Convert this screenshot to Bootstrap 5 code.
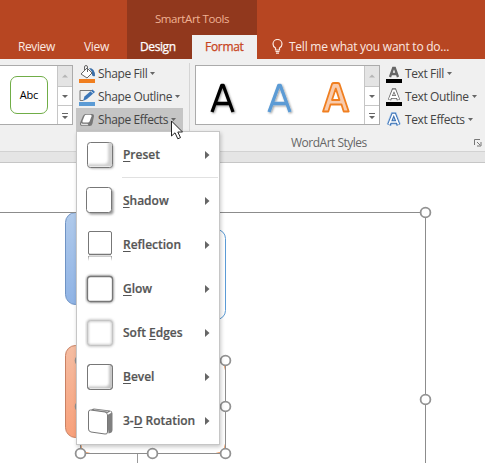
<!DOCTYPE html>
<html lang="en">
<head>
<meta charset="utf-8">
<title>SmartArt Tools</title>
<link href="https://cdn.jsdelivr.net/npm/bootstrap@5.3.0/dist/css/bootstrap.min.css" rel="stylesheet">
<style>
body{width:485px;height:463px;font:12px/16px "Open Sans","Noto Sans",sans-serif;color:#444;background:#fff}
svg{display:block;flex:none}
.titlebar{height:59px;background:#b74622;color:#fbe9e1}
.tabs-main{width:127px}
.context-tabs{width:130px;background:#91381d}
.context-title{height:35px;padding-top:11px;padding-left:0;color:#f0b294;font-size:11.5px;letter-spacing:-.4px}
.tab{height:24px;line-height:24px}
.tab-review{margin-left:18px;width:66px;letter-spacing:-.4px}
.tab-view{letter-spacing:-.3px}
.tab-design{width:65px;padding-left:13px;color:#fff;-webkit-text-stroke:.25px #fff;letter-spacing:-.4px}
.tab-format{width:65px;padding-left:13px;background:#f0f0f0;color:#c8441c;-webkit-text-stroke:.25px #c8441c;letter-spacing:-.3px}
.tellme{padding-left:15px;gap:5px;height:24px;letter-spacing:-.24px}
.ribbon{height:92px;background:#f0f0f0}
.gallery{height:60px;margin-top:6px;background:#fff;border:1px solid #ababab}
.gallery-a{width:73px;border-left:0}
.gallery-b{width:185px;margin-left:5px}
.abc{width:38px;height:38px;margin-left:10px;border:1px solid #70ad47;border-radius:7px;color:#000;font-size:11px;letter-spacing:-.2px}
.scroller{width:15px;border-left:1px solid #c6c6c6}
.scroller>div+div{border-top:1px solid #c6c6c6}
.s1{height:20px;background:#e4e4e4}.s2{height:19px}
.cmds{margin-top:3px}
.cmd{height:23px;padding-left:3px;gap:3px;font-size:12px;letter-spacing:-.38px;white-space:nowrap}
.cmd.on{background:#c5c5c5}
.cmds-shape{width:107px;margin-left:3px}
.rule{width:1px;height:80px;margin:4px 0 0 6px;background:#d5d5d5}
.group-label{left:291px;top:135px;color:#666;letter-spacing:-.5px}
.launcher{left:183px}
.band{height:12px;background:#e5e5e5;border-top:1px solid #d2d2d2;border-bottom:1px solid #c6c6c6}
.effects{left:76px;top:131px;width:144px;height:314px;background:#fff;border:1px solid #c6c6c6;padding-top:1px;box-shadow:1px 2px 4px rgba(0,0,0,.22)}
.effect{height:44px;padding:0 9px 0 8px;font-weight:600;color:#555;letter-spacing:-.02px;-webkit-text-stroke:.2px #555}
.effect>span{margin-left:6px;line-height:18px}
.effect u{text-underline-offset:2px}
.divide{height:2px;margin:0 1px 0 45px;border-top:1px solid #e1e1e1}
.pointer{left:171px;top:120px}
</style>
<script src="https://cdn.jsdelivr.net/npm/bootstrap@5.3.0/dist/js/bootstrap.bundle.min.js"></script>
</head>
<body class="position-relative overflow-hidden m-0">
<header class="titlebar d-flex">
  <div class="tabs-main d-flex align-items-end"><div class="tab tab-review">Review</div><div class="tab tab-view">View</div></div>
  <div class="context-tabs"><div class="context-title text-center">SmartArt Tools</div><div class="d-flex"><div class="tab tab-design">Design</div><div class="tab tab-format">Format</div></div></div>
  <div class="tellme d-flex align-items-center align-self-end"><svg width="12" height="16" fill="none" stroke="#fbe9e1" stroke-width="1.2"><path d="M3.500 11V9Q1 7.500 1 5a4.500 4.500 0 0 1 9 0q0 2.500-2.500 4v2zM3.500 12.500h4M4 14.200h3"/></svg><span>Tell me what you want to do...</span></div>
</header>
<main>
<section class="ribbon d-flex align-items-start">
  <div class="gallery gallery-a d-flex align-items-center justify-content-between">
    <div class="abc d-flex align-items-center justify-content-center">Abc</div>
    <div class="scroller h-100"><div class="s1"><svg width="14" height="20"><path d="M4 11.500h6l-3-3z" fill="#b5b5b5"/></svg></div><div class="s2"><svg width="14" height="18"><path d="M4 8h6l-3 3z" fill="#666"/></svg></div><div><svg width="14" height="18"><path d="M4 10h6l-3 3zM4 7h6v1H4z" fill="#666"/></svg></div></div>
  </div>
  <div class="cmds cmds-shape">
    <div class="cmd d-flex align-items-center"><svg width="16" height="18"><path d="M2 9l6-6 5 5-5 5z" fill="#fff" stroke="#666"/><path d="M5.500 6V2q0-1.500 1.500-1.500T8.500 2v5" fill="none" stroke="#666"/><path d="M10 3q6 0 6 8-2 1-3-1V7z" fill="#3b6fa8"/><path d="M0 14h16v4H0z" fill="#f07f20"/></svg><span>Shape Fill</span><svg width="5" height="4"><path d="M0 0h5L2.500 3z" fill="#666"/></svg></div>
    <div class="cmd d-flex align-items-center"><svg width="16" height="18"><path d="M13 2.500H1v10h3" fill="none" stroke="#777"/><path d="M4 13l1.500-4.500L13.500 1.500 16 4 8 11z" fill="#3b76b8"/><path d="M11.700 3l2.500 2.500" stroke="#f0f0f0"/><path d="M0 14h16v4H0z" fill="#5b9bd5"/></svg><span>Shape Outline</span><svg width="5" height="4"><path d="M0 0h5L2.500 3z" fill="#666"/></svg></div>
    <div class="cmd on d-flex align-items-center"><svg width="16" height="16"><path d="M4 4Q5 2 7 2h6q2 0 2 2l-1.500 7.500Q13 14 10.500 14H3.500Q.500 14 1 11z" fill="#777"/><path d="M5.500 4q.500-1.200 2-1.200h4q1.500 0 1 1.500l-1.800 5q-.500 1.200-2 1.200H4.500Q3 10.500 3.500 9z" fill="#fff"/><path d="M1.800 10.500q1 1.200 2.200 1.200h4.500l1 1.500H3.500q-1.700 0-1.700-2.700z" fill="#e4e4e4"/></svg><span>Shape Effects</span><svg width="5" height="4"><path d="M0 0h5L2.500 3z" fill="#666"/></svg></div>
  </div>
  <div class="rule"></div>
  <div class="gallery gallery-b d-flex justify-content-between">
    <svg width="168" height="58"><defs><filter id="soft" x="-30%" y="-30%" width="160%" height="160%"><feDropShadow dx="1" dy="1" stdDeviation=".8" flood-opacity=".4"/></filter></defs>
      <g fill="none" stroke-linejoin="round" filter="url(#soft)"><path d="M16 46L25.700 19.500h1.600L37 46M19.500 37.500h14" stroke="#000" stroke-width="3.300"/><path d="M73 46L82.700 19.500h1.600L94 46M76.500 37.500h14" stroke="#5b9bd5" stroke-width="3.300"/></g>
      <path d="M127 45.500L136 18q.500-1 2-1h3.500q1.500 0 2 1l9.200 27.500h-5l-2.200-7h-11l-2.200 7zM136 34h7.500l-3.700-11.500z" fill="#f8cbad" stroke="#f07f20" stroke-width="1.800" stroke-linejoin="round"/></svg>
    <div class="scroller h-100"><div class="s1"><svg width="14" height="20"><path d="M4 11.500h6l-3-3z" fill="#b5b5b5"/></svg></div><div class="s2"><svg width="14" height="18"><path d="M4 8h6l-3 3z" fill="#666"/></svg></div><div><svg width="14" height="18"><path d="M4 10h6l-3 3zM4 7h6v1H4z" fill="#666"/></svg></div></div>
  </div>
  <div class="cmds ms-1">
    <div class="cmd ps-0 d-flex align-items-center"><svg width="18" height="18"><path d="M6 12l3.200-9h1.600L14 12M7.500 9h5" fill="none" stroke="#666" stroke-width="2.300"/><path d="M2 14h16v4H2z"/></svg><span>Text Fill</span><svg width="5" height="4"><path d="M0 0h5L2.500 3z" fill="#666"/></svg></div>
    <div class="cmd ps-0 d-flex align-items-center"><svg width="18" height="18"><path d="M5.500 12L9.300 2h1.400l3.800 10M7 9h6" fill="none" stroke="#666" stroke-width="3.400"/><path d="M5.500 11.500L9.300 2.500h1.400l3.800 9M7 9h6" fill="none" stroke="#fff" stroke-width="1.800"/><path d="M2 14h16v4H2z"/></svg><span>Text Outline</span><svg width="5" height="4"><path d="M0 0h5L2.500 3z" fill="#666"/></svg></div>
    <div class="cmd ps-0 d-flex align-items-center"><svg width="18" height="18"><path d="M5 14L9 3.500h1.500l4 10.500M6.500 11h6.500" fill="none" stroke="#a9c9ed" stroke-width="5"/><path d="M5 14L9 3.500h1.500l4 10.500M6.500 11h6.500" fill="none" stroke="#3b70b2" stroke-width="3.600"/><path d="M5 13.500L9 3.500h1.500l4 10M6.500 11h6.500" fill="none" stroke="#fff" stroke-width="1.700"/></svg><span>Text Effects</span><svg width="5" height="4"><path d="M0 0h5L2.500 3z" fill="#666"/></svg></div>
  </div>
</section>
<div class="group-label position-absolute d-flex align-items-center"><span>WordArt Styles</span><svg class="launcher position-absolute" width="8" height="8" fill="none" stroke="#777"><path d="M.500 6V.500H6M3 3l3 3M7 3v4H3"/></svg></div>
<div class="band"></div>
<svg width="485" height="300" viewBox="0 163 485 300">
  <defs><linearGradient id="blue" x2="0" y2="1"><stop stop-color="#b0caeb"/><stop offset="1" stop-color="#8fb3e5"/></linearGradient><linearGradient id="orange" x2="0" y2="1"><stop stop-color="#f5bda2"/><stop offset="1" stop-color="#f8a07a"/></linearGradient></defs>
  <rect x="80.500" y="229.500" width="145" height="90" rx="9" fill="#fff" stroke="#5b9bd5"/>
  <rect x="65.500" y="212.500" width="145" height="92" rx="10" fill="url(#blue)" stroke="#6f93c4"/>
  <rect x="80.500" y="360.500" width="145" height="93" rx="10" fill="#fff" stroke="#ed7d31"/>
  <rect x="65.500" y="345.500" width="145" height="92" rx="10" fill="url(#orange)" stroke="#c98163"/>
  <path d="M137.500 453v10" stroke="#999"/>
  <g fill="none" stroke="#8c8c8c"><path d="M0 212.500h425.500V463"/><path d="M80.500 360.500h145v93h-145z"/></g>
  <g fill="#fff" stroke="#929292" stroke-width="1.800"><circle cx="425.500" cy="212.500" r="4.900"/><circle cx="425.500" cy="399.500" r="4.900"/><circle cx="225.500" cy="360.500" r="4.900"/><circle cx="225.500" cy="406.500" r="4.900"/><circle cx="225.500" cy="453.500" r="4.900"/><circle cx="152.500" cy="453.500" r="4.900"/><circle cx="80.500" cy="453.500" r="4.900"/><circle cx="80.500" cy="406.500" r="4.900"/><circle cx="80.500" cy="360.500" r="4.900"/></g>
</svg>
</main>
<nav class="effects position-absolute">
  <div class="effect d-flex align-items-center"><svg width="32" height="32"><defs><filter id="b1" x="-30%" y="-30%" width="160%" height="160%"><feGaussianBlur stdDeviation="1"/></filter><clipPath id="in"><rect x="3" y="3.500" width="24" height="24" rx="2"/></clipPath></defs><rect x="4" y="5" width="24.500" height="24.500" rx="3" fill="#aaa" filter="url(#b1)"/><rect x="2.500" y="3.500" width="25" height="25" rx="3" fill="#fff" stroke="#777"/><g clip-path="url(#in)"><path d="M3 29V25h16q4 0 4-4V3h5v26z" fill="#d0d0d0" filter="url(#b1)"/></g></svg><span><u>P</u>reset</span><svg class="ms-auto" width="5" height="8"><path d="M0 0v8l4.500-4z" fill="#666"/></svg></div>
  <div class="divide"></div>
  <div class="effect d-flex align-items-center"><svg width="32" height="32"><rect x="3.500" y="4.500" width="25" height="25" rx="3" fill="#999" filter="url(#b1)"/><rect x="1.500" y="2.500" width="25" height="25" rx="3" fill="#fff" stroke="#777"/></svg><span><u>S</u>hadow</span><svg class="ms-auto" width="5" height="8"><path d="M0 0v8l4.500-4z" fill="#666"/></svg></div>
  <div class="effect d-flex align-items-center"><svg width="32" height="32"><defs><linearGradient id="fade" x2="0" y2="1"><stop stop-color="#999"/><stop offset="1" stop-color="#fff"/></linearGradient></defs><path d="M3 27h1v5H3zM26 27h1v5h-1z" fill="url(#fade)"/><path d="M4 27.500h22" stroke="#ccc"/><rect x="3.500" y="2.500" width="23" height="23" rx="1.500" fill="#fff" stroke="#777"/><path d="M4 25.500h22" stroke="#777" stroke-width="1.500"/></svg><span><u>R</u>eflection</span><svg class="ms-auto" width="5" height="8"><path d="M0 0v8l4.500-4z" fill="#666"/></svg></div>
  <div class="effect d-flex align-items-center"><svg width="32" height="32"><rect x="2.500" y="3.500" width="25" height="25" rx="3" fill="none" stroke="#999" stroke-width="2.600" filter="url(#b1)"/><rect x="2.500" y="3.500" width="25" height="25" rx="3" fill="#fff" stroke="#777" stroke-width="1.300"/></svg><span><u>G</u>low</span><svg class="ms-auto" width="5" height="8"><path d="M0 0v8l4.500-4z" fill="#666"/></svg></div>
  <div class="effect d-flex align-items-center"><svg width="32" height="32"><rect x="2.500" y="3.500" width="25" height="25" rx="3" fill="#fff" stroke="#c4c4c4" stroke-width="2.400" filter="url(#b1)"/><rect x="2.500" y="3.500" width="25" height="25" rx="3" fill="none" stroke="#c4c4c4"/></svg><span>Soft <u>E</u>dges</span><svg class="ms-auto" width="5" height="8"><path d="M0 0v8l4.500-4z" fill="#666"/></svg></div>
  <div class="effect d-flex align-items-center"><svg width="32" height="32"><rect x="2.500" y="3.500" width="25" height="25" rx="3" fill="#fff" stroke="#777"/><g clip-path="url(#in)"><path d="M3 29V25.500h17q4 0 4-4V3h4v26z" fill="#c4c4c4" filter="url(#b1)"/></g><rect x="2.500" y="3.500" width="25" height="25" rx="3" fill="none" stroke="#777"/></svg><span><u>B</u>evel</span><svg class="ms-auto" width="5" height="8"><path d="M0 0v8l4.500-4z" fill="#666"/></svg></div>
  <div class="effect d-flex align-items-center"><svg width="32" height="32"><path d="M6 5q1-1.500 3-1.500l16 2q2.500.500 2.500 3V25q0 3-4 3.500L21 8z" fill="#808080"/><path d="M9 4.800l14 1.700" stroke="#ddd" stroke-width=".7"/><path d="M3.500 7q0-2 2-2L20 7q2.500.500 2.500 3v17q0 2.500-2.500 2L6 27q-2.500-.500-2.500-3z" fill="#fff" stroke="#777"/><path d="M22.500 9l3.500-2" stroke="#fff" stroke-width="1.500"/></svg><span>3-<u>D</u> Rotation</span><svg class="ms-auto" width="5" height="8"><path d="M0 0v8l4.500-4z" fill="#666"/></svg></div>
</nav>
<svg class="pointer position-absolute" width="13" height="20"><path d="M.500 1v15l3.500-3.200 2.800 6 2.700-1.200-2.700-5.600h4.700z" fill="#fff" stroke="#222"/></svg>
</body>
</html>
